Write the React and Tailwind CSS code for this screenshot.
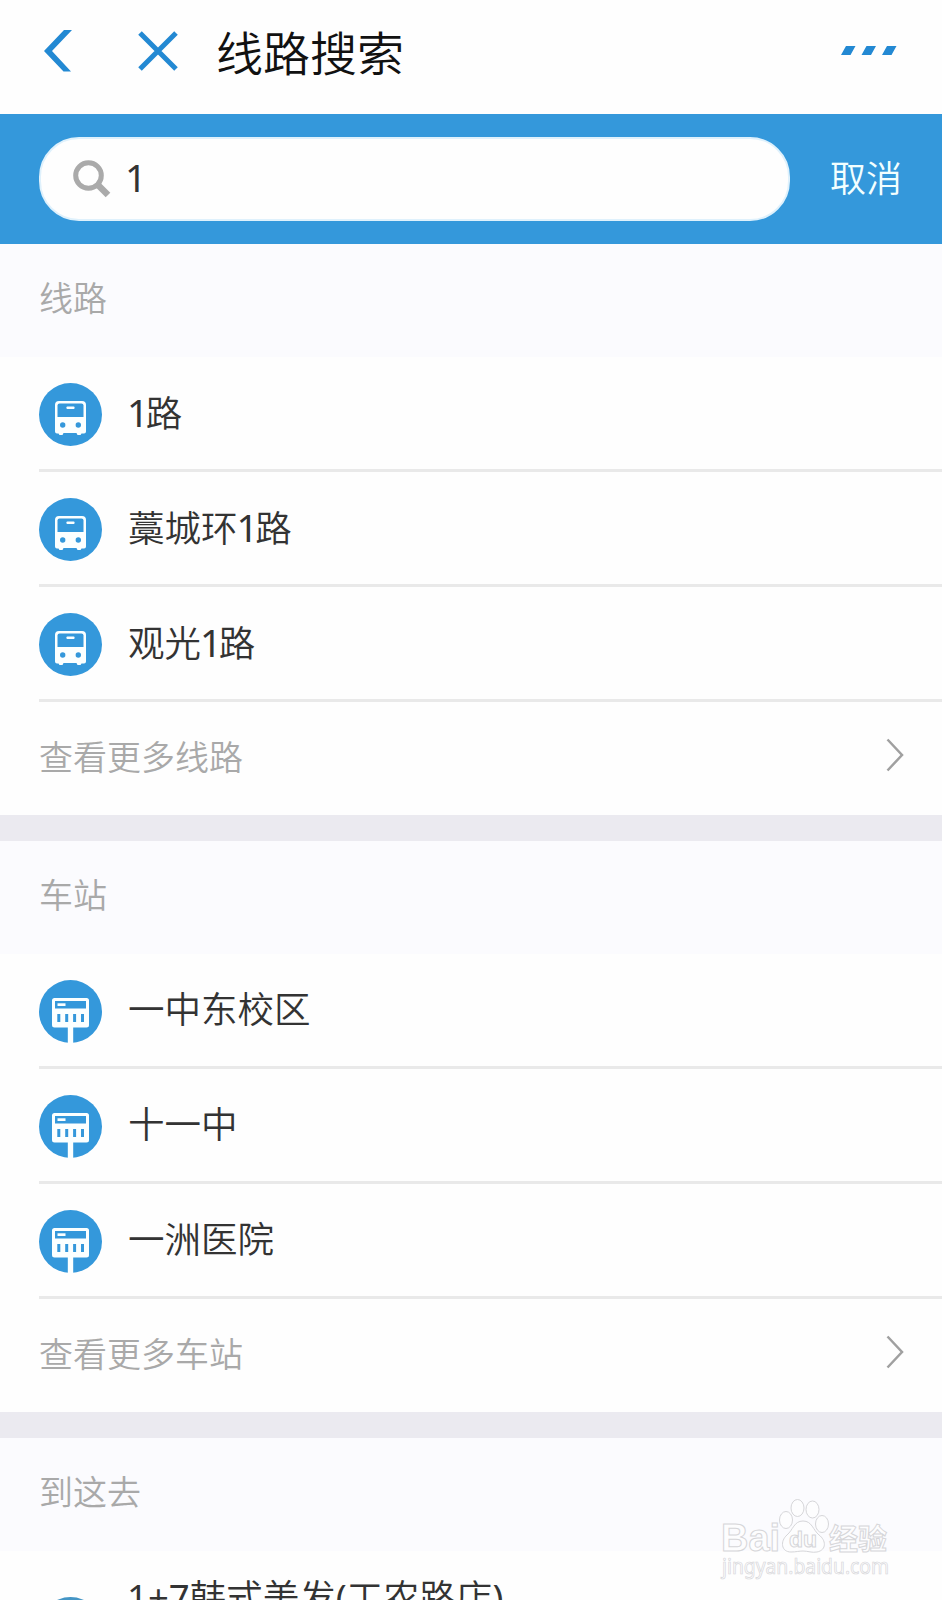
const LINES = ["1路", "藁城环1路", "观光1路"];
const STATIONS = ["一中东校区", "十一中", "一洲医院"];

function BusIcon() {
  return (
    <svg viewBox="0 0 63 63" className="size-[63px] shrink-0">
      <circle cx="31.5" cy="31.5" r="31.5" fill="#3498db" />
      <path
        d="M20 18h23a4 4 0 0 1 4 4v26.500a2 2 0 0 1-2 2h-2.500l-1 1.500h-3l-1-2h-13l-1 2h-3l-1-1.500H18a2 2 0 0 1-2-2V22a4 4 0 0 1 4-4z"
        fill="#fbffff"
      />
      <path d="M20.500 20.500h22a2 2 0 0 1 2 2V34h-26V22.500a2 2 0 0 1 2-2z" fill="#3498db" />
      <rect x="27.500" y="23.500" width="8" height="2.500" rx="0.800" fill="#fbffff" />
      <circle cx="23.700" cy="42" r="2.700" fill="#3498db" />
      <circle cx="39.300" cy="42" r="2.700" fill="#3498db" />
    </svg>
  );
}

function StationIcon() {
  return (
    <svg viewBox="0 0 63 63" className="size-[63px] shrink-0">
      <circle cx="31.5" cy="31.5" r="31.5" fill="#3498db" />
      <rect x="13" y="18" width="37" height="29.5" rx="2.5" fill="#fbffff" />
      <rect x="28.800" y="46" width="5.400" height="17" fill="#fbffff" />
      <rect x="16" y="21" width="31" height="7.500" fill="#3498db" />
      <rect x="18.500" y="23.300" width="8" height="2.700" fill="#fbffff" />
      {[18.3, 26.2, 34.1, 42].map((x) => (
        <rect key={x} x={x} y="34" width="3" height="8" fill="#3498db" />
      ))}
    </svg>
  );
}

function SectionTitle({ children }) {
  return (
    <h2 className="flex h-[113px] items-center bg-[#fbfbfe] pb-[6px] pl-[39px] text-[34px] leading-none text-[#a9a9a9]">
      {children}
    </h2>
  );
}

// digits run slightly taller and tighter than the characters around them
function ItemName({ name }) {
  return (
    <span className="pb-[4px] text-[36.5px] leading-none">
      {name.split(/(\d+)/).map((part, index) =>
        /\d/.test(part) ? (
          <span key={index} className="-ml-px text-[38px] leading-none font-normal tracking-[-3px]">
            {part}
          </span>
        ) : (
          part
        )
      )}
    </span>
  );
}

function Section({ title, items, icon, more }) {
  return (
    <section>
      <SectionTitle>{title}</SectionTitle>
      <ul className="pl-[39px]">
        {items.map((item) => (
          <li key={item} className="flex h-[115px] items-center gap-[26px] border-b-3 border-[#e9e9e9] pt-[3px]">
            {icon}
            <ItemName name={item} />
          </li>
        ))}
      </ul>
      <div className="flex h-[113px] items-center justify-between pr-[38px] pb-[4px] pl-[39px] text-[34px] leading-none text-[#a9a9a9]">
        <span>{more}</span>
        <svg viewBox="0 0 18 34" className="mb-1 h-[34px] w-[18px]" fill="none" stroke="#a0a0a0" strokeWidth="2.5">
          <path d="M1.500 1.500L16 17L1.500 32.500" />
        </svg>
      </div>
      <div className="h-[26px] bg-[#ebeaf0]" />
    </section>
  );
}

function Watermark() {
  return (
    <svg
      viewBox="0 0 180 90"
      className="absolute top-[1492px] left-[716px] h-[90px] w-[180px]"
      fill="#fdfdfe"
      stroke="#d6d6d9"
      strokeWidth="1"
      fontFamily="'Liberation Sans', 'Noto Sans CJK SC', sans-serif"
    >
      <text x="5" y="59" fontSize="38" fontWeight="700" textLength="59" lengthAdjust="spacingAndGlyphs">
        Bai
      </text>
      <ellipse cx="70" cy="28" rx="6.500" ry="8.500" />
      <ellipse cx="81.500" cy="16" rx="6.500" ry="8.500" />
      <ellipse cx="96.500" cy="17.500" rx="6.500" ry="8.500" />
      <ellipse cx="106" cy="32" rx="6.500" ry="8.500" />
      <path d="M87 29C78 29 77 38 71 43C64 49 65 60 75 60C80 60 83 59 87 59C92 59 96 61 101 60C111 58 110 48 103 43C97 38 96 29 87 29Z" />
      <text x="73" y="55" fontSize="22" fontWeight="700" textLength="28" lengthAdjust="spacingAndGlyphs">
        du
      </text>
      <text x="113" y="58" fontSize="29" fontWeight="700">
        经验
      </text>
      <text
        x="6"
        y="82"
        fontSize="21"
        fontFamily="'Noto Sans', sans-serif"
        fontWeight="400"
        strokeWidth="0.700"
        textLength="167"
        lengthAdjust="spacingAndGlyphs"
      >
        jingyan.baidu.com
      </text>
    </svg>
  );
}

export default function App() {
  return (
    <main className="relative h-[1600px] w-[942px] overflow-hidden bg-[#fefefe] font-['Noto_Sans','Noto_Sans_CJK_SC',sans-serif] font-[350] text-[#333]">
      <header className="flex h-[114px] items-center pr-[45px] pb-[13px] pl-[44px]">
        <svg viewBox="0 0 28 42" className="h-[42px] w-[28px]" fill="#2389d3">
          <path d="M20 0H28L8 21L27 41.500H19.500L0 21z" />
        </svg>
        <svg viewBox="0 0 40 40" className="ml-[66px] size-10" stroke="#2389d3" strokeWidth="5">
          <path d="M2 2L38 38M38 2L2 38" />
        </svg>
        <h1 className="ml-[38px] pt-[5px] text-[47px] leading-none text-[#111]">线路搜索</h1>
        <svg viewBox="0 0 56 9" className="ml-auto h-[9px] w-[56px]" fill="#2389d3">
          <path d="M5 0H14.500L9.500 9H0zM25.500 0H35L30 9H20.500zM46 0H55.500L50.500 9H41z" />
        </svg>
      </header>

      <div className="flex h-[130px] items-center bg-[#3498db] pl-[39px]">
        <div className="flex h-[84px] w-[751px] items-center rounded-[40px] border-2 border-[#dff1fc] bg-[#fefefe] pl-[32px]">
          <svg viewBox="0 0 38 38" className="size-[38px]" fill="none" stroke="#aaa">
            <circle cx="15.500" cy="15.500" r="12.800" strokeWidth="5" />
            <path d="M24.500 24.500L35 35" strokeWidth="6.500" />
          </svg>
          <span className="ml-[14px] pb-[5px] text-[38px] leading-none font-normal">1</span>
        </div>
        <button type="button" className="ml-[40px] text-[36px] leading-none text-[#f2ffff]">
          取消
        </button>
      </div>

      <Section title="线路" items={LINES} icon={<BusIcon />} more="查看更多线路" />
      <Section title="车站" items={STATIONS} icon={<StationIcon />} more="查看更多车站" />

      <SectionTitle>到这去</SectionTitle>
      <div className="flex items-start gap-[25px] pl-[39px]">
        <div className="mt-[46px] size-[63px] rounded-full bg-[#4495c5]" />
        <span className="mt-[28px] text-[36.5px] leading-none whitespace-nowrap">
          <span className="font-normal">1+7</span>韩式美发<span className="font-normal">(</span>工农路店
          <span className="font-normal">)</span>
        </span>
      </div>

      <Watermark />
    </main>
  );
}
